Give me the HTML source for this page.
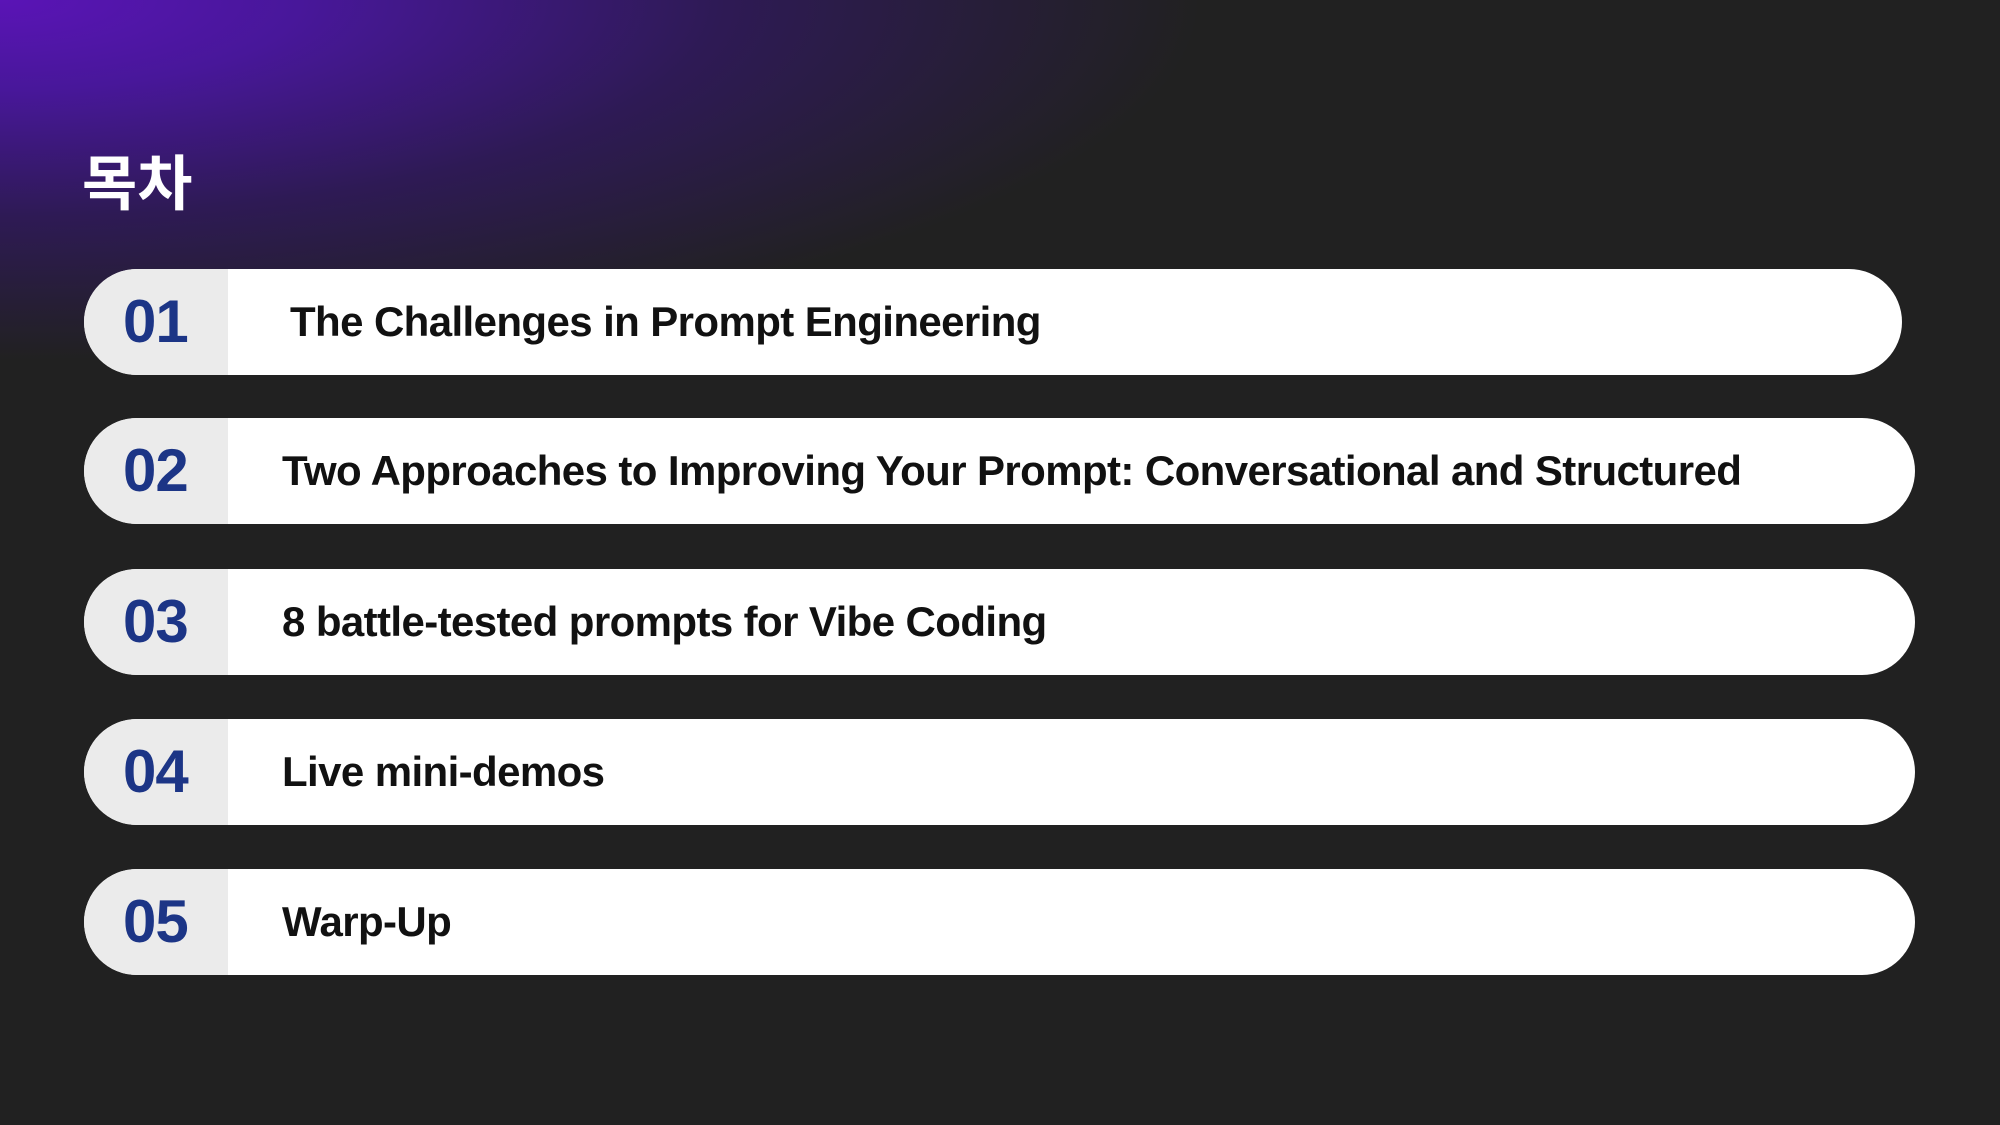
<!DOCTYPE html>
<html><head><meta charset="utf-8">
<style>
html,body{margin:0;padding:0;}
body{width:2000px;height:1125px;overflow:hidden;position:relative;background:#212121;font-family:"Liberation Sans","Noto Sans CJK KR",sans-serif;}
.bg{position:absolute;inset:0;background:radial-gradient(ellipse 1200px 360px at 0px 0px,#5a14b6 0%,#48179a 25%,#2e1a55 60%,rgba(33,33,33,0) 100%);}
.title{position:absolute;left:82px;top:140px;color:#fff;font-size:60px;font-weight:bold;font-family:"Noto Sans CJK KR","NanumGothic",sans-serif;line-height:80px;}
.row{position:absolute;left:84px;height:106px;border-radius:53px;background:#fff;overflow:hidden;}
.num{position:absolute;left:0;top:0;width:144px;height:106px;background:#ebebeb;}
.num span{position:absolute;left:39px;top:0;line-height:106px;font-size:60px;font-weight:bold;color:#1c3586;letter-spacing:-1px;}
.txt{position:absolute;left:198px;top:0;line-height:106px;font-size:42px;font-weight:bold;color:#111;white-space:nowrap;letter-spacing:-0.6px;}
</style></head><body>
<div class="bg"></div>
<div class="title">목차</div>
<div class="row" style="top:269px;width:1818px"><div class="num"><span>01</span></div><div class="txt" style="left:206px">The Challenges in Prompt Engineering</div></div>
<div class="row" style="top:418px;width:1831px"><div class="num"><span>02</span></div><div class="txt">Two Approaches to Improving Your Prompt: Conversational and Structured</div></div>
<div class="row" style="top:569px;width:1831px"><div class="num"><span>03</span></div><div class="txt">8 battle-tested prompts for Vibe Coding</div></div>
<div class="row" style="top:719px;width:1831px"><div class="num"><span>04</span></div><div class="txt">Live mini-demos</div></div>
<div class="row" style="top:869px;width:1831px"><div class="num"><span>05</span></div><div class="txt">Warp-Up</div></div>
</body></html>
